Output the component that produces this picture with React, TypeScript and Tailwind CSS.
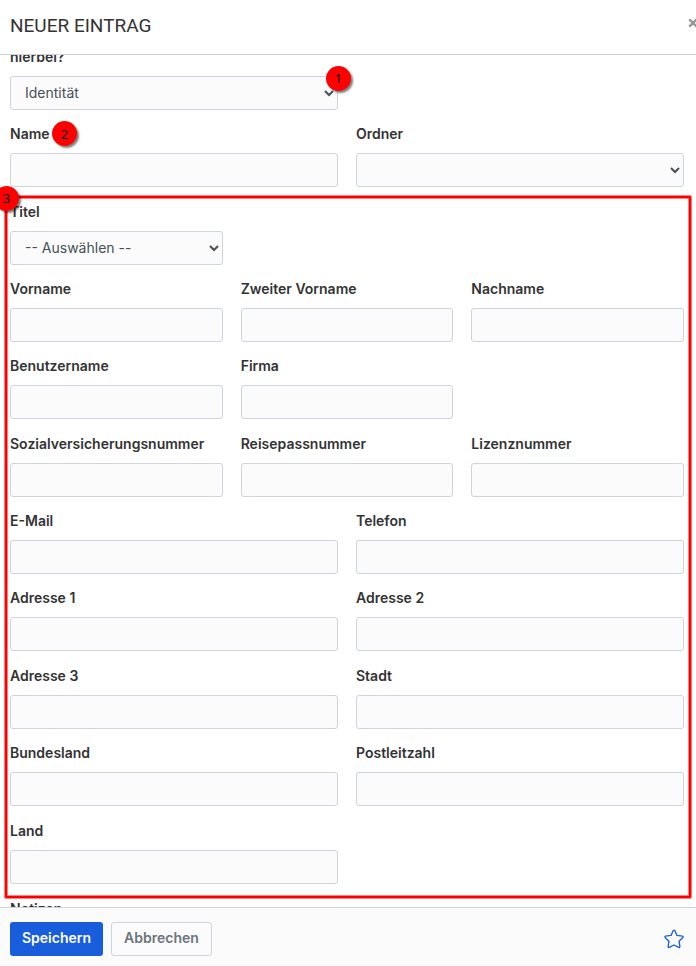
import React from 'react';

const control =
  'block h-[34px] w-full rounded-[3px] border border-[#ced4dc] bg-[#fbfbfb] px-[10px] pb-[2px] text-[14px] text-[#465057] outline-none';

function Badge({ n, className }: { n: number; className: string }) {
  return (
    <span
      className={`absolute z-10 flex size-[25px] items-center justify-center rounded-full bg-[#ff0000] font-['Noto_Sans',sans-serif] text-[13px] font-normal text-black shadow-[2px_2px_2px_rgba(0,0,0,0.5)] ${className}`}
    >
      {n}
    </span>
  );
}

type FieldProps = {
  id: string;
  label: string;
  options?: string[];
  labelBadge?: React.ReactNode;
  controlBadge?: React.ReactNode;
};

function Field({ id, label, options, labelBadge, controlBadge }: FieldProps) {
  return (
    <div className="min-w-0">
      <div className="mb-2 flex h-[22px]">
        <label htmlFor={id} className="relative text-[14px] leading-[22px] font-semibold whitespace-nowrap">
          {label}
          {labelBadge}
        </label>
      </div>
      <div className="relative">
        {options ? (
          <select id={id} className={control}>
            {options.map((o) => (
              <option key={o}>{o}</option>
            ))}
          </select>
        ) : (
          <input id={id} type="text" className={control} />
        )}
        {controlBadge}
      </div>
    </div>
  );
}

function Halves({ children }: { children: React.ReactNode }) {
  return <div className="grid grid-cols-2 gap-x-[18px]">{children}</div>;
}

function Thirds({ children }: { children: React.ReactNode }) {
  return <div className="grid grid-cols-3 gap-x-[18px]">{children}</div>;
}

function Section({ children }: { children: React.ReactNode }) {
  return <div className="flex flex-col gap-[13px]">{children}</div>;
}

export default function App() {
  return (
    <form
      className="flex h-screen flex-col overflow-hidden bg-white font-['Inter',sans-serif] text-[#333333]"
      onSubmit={(e) => e.preventDefault()}
    >
      <header className="flex h-[55px] shrink-0 items-start justify-between border-b border-[#ced4dc] pl-[10px]">
        <h1 className="pt-[14px] font-['Roboto',sans-serif] text-[19px] leading-[24px]">NEUER EINTRAG</h1>
        <button type="button" aria-label="Schließen" className="-mr-[2px] pt-[18px] text-[#999999]">
          <svg width="10" height="10" viewBox="0 0 10 10" stroke="currentColor" strokeWidth="2.6">
            <path d="M1.3 1.3 8.7 8.7M8.7 1.3 1.3 8.7" />
          </svg>
        </button>
      </header>

      <main className="min-h-0 flex-1 overflow-hidden pr-3 pl-[10px]">
        <div className="-mt-[9px] flex flex-col gap-[14px]">
          <Section>
            <Halves>
              <Field
                id="type"
                label="hierbei?"
                options={['Identität']}
                controlBadge={<Badge n={1} className="-top-[10px] -right-[13px]" />}
              />
            </Halves>
            <Halves>
              <Field id="name" label="Name" labelBadge={<Badge n={2} className="-top-[2px] left-[42px]" />} />
              <Field id="folder" label="Ordner" options={['']} />
            </Halves>
          </Section>

          <div className="relative flex flex-col gap-[14px]">
            <div className="pointer-events-none absolute -top-[5px] -right-[7px] -bottom-[14px] -left-[5px] rounded-[1px] border-2 border-[#ff0000] shadow-[0_0_0_1px_rgba(255,0,0,0.5),inset_0_0_0_1px_rgba(255,0,0,0.5)]" />
            <Badge n={3} className="-top-[15px] -left-[16px]" />
            <Section>
              <Thirds>
                <Field id="title" label="Titel" options={['-- Auswählen --']} />
              </Thirds>
              <Thirds>
                <Field id="first" label="Vorname" />
                <Field id="middle" label="Zweiter Vorname" />
                <Field id="last" label="Nachname" />
              </Thirds>
              <Thirds>
                <Field id="user" label="Benutzername" />
                <Field id="company" label="Firma" />
              </Thirds>
            </Section>
            <Section>
              <Thirds>
                <Field id="ssn" label="Sozialversicherungsnummer" />
                <Field id="passport" label="Reisepassnummer" />
                <Field id="license" label="Lizenznummer" />
              </Thirds>
              <Halves>
                <Field id="email" label="E-Mail" />
                <Field id="phone" label="Telefon" />
              </Halves>
              <Halves>
                <Field id="address1" label="Adresse 1" />
                <Field id="address2" label="Adresse 2" />
              </Halves>
            </Section>
            <Section>
              <Halves>
                <Field id="address3" label="Adresse 3" />
                <Field id="city" label="Stadt" />
              </Halves>
              <Halves>
                <Field id="state" label="Bundesland" />
                <Field id="zip" label="Postleitzahl" />
              </Halves>
            </Section>
            <Section>
              <Halves>
                <Field id="country" label="Land" />
              </Halves>
            </Section>
          </div>

          <Section>
            <Field id="notes" label="Notizen" />
          </Section>
        </div>
      </main>

      <footer className="flex h-[59px] shrink-0 items-center justify-between border-t border-[#ced4dc] bg-[#fbfbfb] pt-1 pr-3 pl-[10px]">
        <div className="flex gap-2">
          <button type="submit" className="h-[34px] rounded-[3px] bg-[#175ddc] px-3 pb-[3px] text-[14px] font-semibold text-white">
            Speichern
          </button>
          <button
            type="button"
            className="h-[34px] rounded-[3px] border border-[#ced4dc] bg-[#fbfbfb] px-3 pb-[3px] text-[14px] font-semibold text-[#6c757d]"
          >
            Abbrechen
          </button>
        </div>
        <button type="button" aria-label="Favorit" className="text-[#175ddc]">
          <svg width="20" height="20" viewBox="0 0 20 20" fill="none" stroke="currentColor" strokeWidth="1.3" strokeLinejoin="round">
            <path d="M9.2 1.5Q10 .6 10.8 1.5L12.9 6.4 18.4 7.1Q19.6 7.5 18.9 8.5L15 12.2 15.9 17.6Q15.8 18.8 14.7 18.4L10 16 5.3 18.4Q4.2 18.8 4.1 17.6L5 12.2 1.1 8.5Q.4 7.5 1.6 7.1L7.1 6.4Z" />
          </svg>
        </button>
      </footer>
    </form>
  );
}
